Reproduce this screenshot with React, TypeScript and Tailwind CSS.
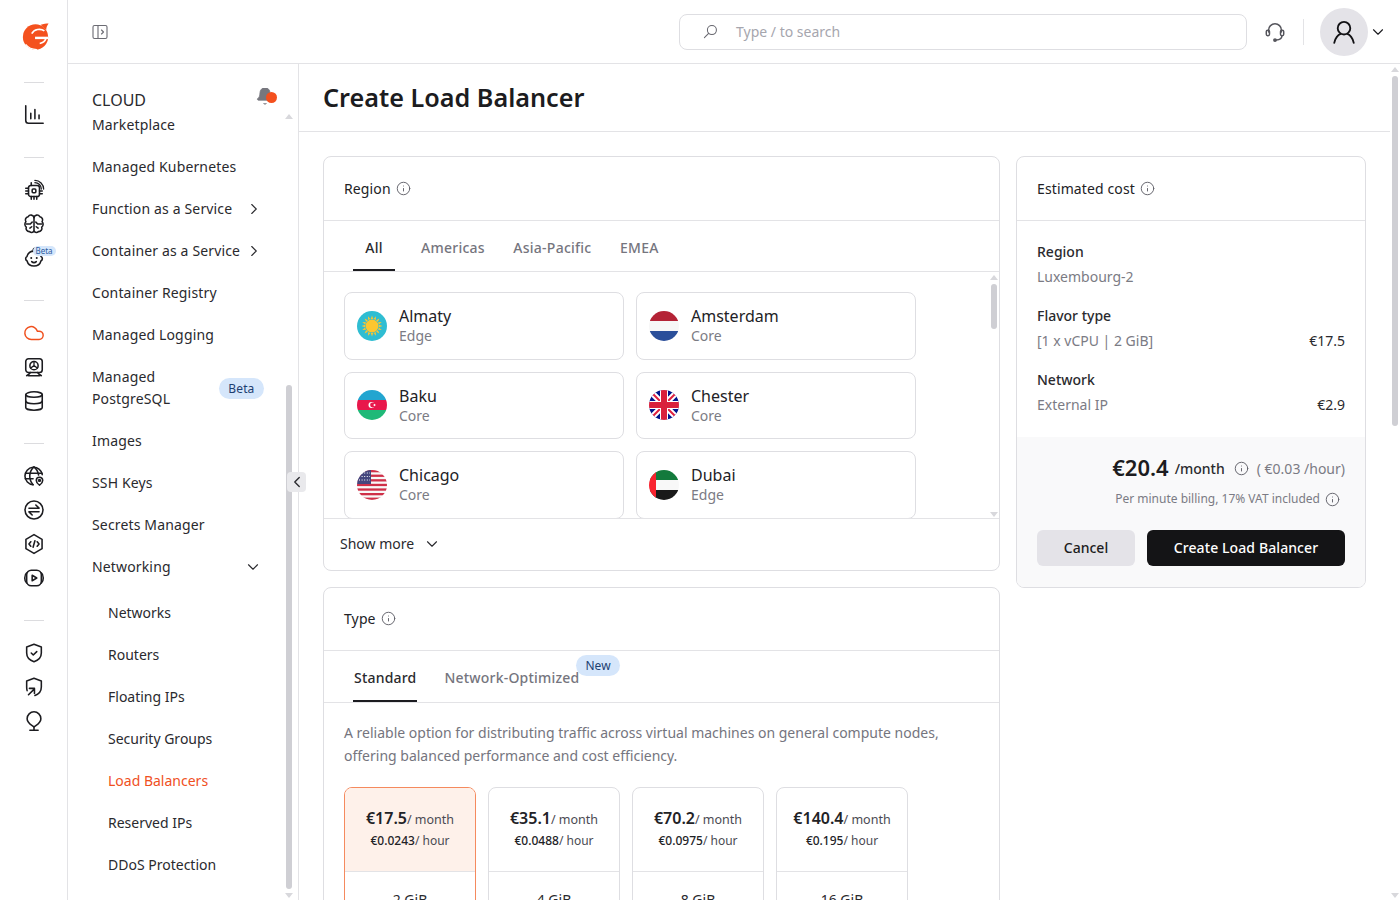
import type { ReactNode } from "react";
import {
  Bell,
  ChevronDown,
  ChevronLeft,
  ChevronRight,
  Cloud,
  Database,
  Info,
} from "lucide-react";

const NAV_TOP = [
  { label: "Marketplace" },
  { label: "Managed Kubernetes" },
  { label: "Function as a Service", arrow: true },
  { label: "Container as a Service", arrow: true },
  { label: "Container Registry" },
  { label: "Managed Logging" },
];
const NAV_MID = ["Images", "SSH Keys", "Secrets Manager"];
const NAV_SUB = ["Networks", "Routers", "Floating IPs", "Security Groups", "Load Balancers", "Reserved IPs", "DDoS Protection"];

const PLANS = [
  { month: "€17.5", hour: "€0.0243", ram: "2 GiB", active: true },
  { month: "€35.1", hour: "€0.0488", ram: "4 GiB" },
  { month: "€70.2", hour: "€0.0975", ram: "8 GiB" },
  { month: "€140.4", hour: "€0.195", ram: "16 GiB" },
];

function Svg({ children, className = "text-[#1c1c20]" }: { children: ReactNode; className?: string }) {
  return (
    <svg viewBox="0 0 24 24" width="22" height="22" fill="none" stroke="currentColor" strokeWidth="1.7" strokeLinecap="round" strokeLinejoin="round" className={className}>
      {children}
    </svg>
  );
}

const RAIL_GROUPS: ReactNode[][] = [
  [
    <Svg key="chart"><path d="M3 2v16a3 3 0 0 0 3 3h16" /><path d="M8.500 16v-6M13 16V6M17.500 16v-4" /></Svg>,
  ],
  [
    <Svg key="chip">
      <rect x="6" y="7" width="12" height="12" rx="2.500" />
      <rect x="10" y="11" width="4" height="4" rx="1" />
      <path d="M3 10h3M3 13h3M3 16h3M18 13h3M18 16h3M9 19v3M12 19v3M15 19v3M9 4v3" />
      <path d="M13 4a7 7 0 0 1 7 7M13 1.500A9.500 9.500 0 0 1 22.500 11" strokeWidth="1.400" />
    </Svg>,
    <Svg key="brain">
      <path d="M12 5v15" />
      <path d="M12 5a3.400 3.400 0 0 0-6.300-1A3.600 3.600 0 0 0 3.200 9.600a3.800 3.800 0 0 0 .4 5.800 3.600 3.600 0 0 0 3.600 4.900A3.300 3.300 0 0 0 12 20" />
      <path d="M12 5a3.400 3.400 0 0 1 6.300-1 3.600 3.600 0 0 1 2.500 5.600 3.800 3.800 0 0 1-.4 5.800 3.600 3.600 0 0 1-3.600 4.900A3.300 3.300 0 0 1 12 20" />
      <path d="M3.600 12H8l2-2M20.400 12H16l-2-2M7.500 16.500l2-1.500M16.500 16.500l-2-1.500" />
    </Svg>,
    <div key="baby" className="relative">
      <Svg>
        <path d="M12 4.500a8 8 0 0 0-7.700 6A2.500 2.500 0 0 0 4.300 15a8 8 0 0 0 15.400 0 2.500 2.500 0 0 0 0-4.500 8 8 0 0 0-4.200-5" />
        <path d="M12 4.500c-1.500-1-1-3 1-3" />
        <path d="M9 12v.1M15 12v.1" strokeWidth="2.200" />
        <path d="M9.500 16a3.500 3.500 0 0 0 5 0" />
      </Svg>
      <span className="absolute left-[10px] -top-[1px] rounded-full bg-[#d5e6fb] px-[3px] text-[8px] leading-[10px] text-[#2b5c9e]">Beta</span>
    </div>,
  ],
  [
    <Cloud key="cloud" size={22} strokeWidth={1.6} className="text-[#f0501e]" />,
    <Svg key="screen">
      <rect x="3" y="3" width="18" height="15" rx="3" />
      <circle cx="12" cy="10.500" r="4.500" />
      <path d="M12 10.500V6M12 10.500l-3.600 2.600M12 10.500l3.600 2.600" strokeWidth="1.400" />
      <path d="M4 21.500c3-1.800 4-3.500 4-3.500M20 21.500c-3-1.800-4-3.500-4-3.500M6 21.500h12" />
    </Svg>,
    <Database key="db" size={22} strokeWidth={1.7} className="text-[#1c1c20]" />,
  ],
  [
    <Svg key="globe">
      <path d="M21 10.500A9.500 9.500 0 1 0 11 21.500" />
      <path d="M3 9h18M2.500 15H11M12 2c-6 5-6 14-1 19.500M12 2c3 2.500 4.600 5.500 5 9" />
      <path d="M18 22s-3.500-2.600-3.500-5.200a3.500 3.500 0 0 1 7 0C21.500 19.400 18 22 18 22z" />
      <circle cx="18" cy="16.800" r="1" />
    </Svg>,
    <Svg key="swap">
      <circle cx="12" cy="12" r="9.800" />
      <path d="M6.500 10h11l-3.500-3.500M17.500 14h-11l3.500 3.500" />
    </Svg>,
    <Svg key="hex">
      <path d="M12 1.800l8.800 5.100v10.200L12 22.200l-8.800-5.100V6.900z" />
      <path d="M8.500 9.500L6.500 12l2 2.500M15.500 9.500l2 2.500-2 2.500M13 8.500l-2 7" />
    </Svg>,
    <Svg key="play">
      <rect x="4" y="3.500" width="16" height="17" rx="5" />
      <path d="M4 6.500c-2.800 2-2.800 9 0 11M20 6.500c2.800 2 2.800 9 0 11" />
      <path d="M10 9l5 3-5 3z" />
    </Svg>,
  ],
  [
    <Svg key="shield">
      <path d="M12 2.500l8 3v6.500c0 5-3.500 8-8 9.500-4.500-1.500-8-4.500-8-9.500V5.500z" />
      <path d="M9 12l2.200 2.200L15 10.500" />
    </Svg>,
    <Svg key="shield2">
      <path d="M4.500 16C4 14 4 13 4 12V5.500l8-3 8 3V12c0 4.500-3 7.800-7 9.200" />
      <path d="M6 20.500l6.500-6.500M7 13.500h5.500V19" />
    </Svg>,
    <Svg key="bulb">
      <path d="M12 2a7.500 7.500 0 0 0-7.500 7.500c0 4.500 3.500 6 7.500 9 4-3 7.500-4.500 7.500-9A7.500 7.500 0 0 0 12 2z" />
      <path d="M12 18.500V22M7.500 22h9" />
    </Svg>,
  ],
];

function Rail() {
  return (
    <aside className="flex h-full w-[68px] shrink-0 flex-col items-center border-r border-[#e3e3e6] bg-white">
      <div className="flex h-[72px] shrink-0 items-center pl-[3px]">
        <svg viewBox="5 5 31 31" width="29" height="29">
          <circle cx="20.500" cy="21" r="13.500" fill="#f4511e" />
          <path d="M26 8c3-1 6-1.500 8.500-1.500-1.500 2-2.500 4-2.500 7z" fill="#f4511e" />
          <path d="M30 14.500C26 11.500 19 12.500 16.500 17.500" fill="none" stroke="#fff" strokeWidth="1.800" />
          <path d="M20 22h14" fill="none" stroke="#fff" strokeWidth="2.600" />
          <path d="M31.500 23c-1 3-3.500 4.500-6.500 5" fill="none" stroke="#fff" strokeWidth="1.800" />
          <path d="M10 29c3 4 7.500 5.500 12 5.500" fill="none" stroke="#fff" strokeWidth="1.300" />
        </svg>
      </div>
      {RAIL_GROUPS.map((group, i) => (
        <div key={i} className="flex flex-col items-center">
          <div className="mt-[10px] h-px w-5 bg-[#dcdcdf]" />
          <div className="mb-[10px] mt-[15px] flex flex-col items-center">
            {group.map((icon, j) => (
              <div key={j} className="flex h-[34px] w-[34px] items-center justify-center">
                {icon}
              </div>
            ))}
          </div>
          <div className="h-[5px]" />
        </div>
      ))}
    </aside>
  );
}

function Sidebar() {
  return (
    <nav className="relative flex h-full w-[231px] shrink-0 border-r border-[#e3e3e6] bg-white pt-6 text-[14px] leading-[22px] tracking-[0.15px] text-[#2a2a2e]">
      <div className="min-w-0 flex-1 overflow-hidden pl-6">
        <div className="-mb-2 flex h-[24px] items-center justify-between pr-[10px] text-[16px] tracking-normal">
          <span>CLOUD</span>
          <span className="relative -top-[4px] flex">
            <Bell size={20} fill="#77777e" strokeWidth={1} className="text-[#77777e]" />
            <span className="absolute -right-[2px] top-[6px] h-[11px] w-[11px] rounded-full bg-[#f4501e]" />
          </span>
        </div>
        {NAV_TOP.map((item) => (
          <div key={item.label} className="flex h-[42px] items-center justify-between pr-[22px]">
            <span>{item.label}</span>
            {item.arrow && <ChevronRight size={18} strokeWidth={1.5} />}
          </div>
        ))}
        <div className="flex h-[64px] items-center justify-between pr-[21px]">
          <span>Managed<br />PostgreSQL</span>
          <span className="rounded-full bg-[#d5e6fb] px-[9.500px] text-[12px] leading-[21px] text-[#1d3f72]">Beta</span>
        </div>
        {NAV_MID.map((label) => (
          <div key={label} className="flex h-[42px] items-center">{label}</div>
        ))}
        <div className="flex h-[42px] items-center justify-between pr-[23px]">
          <span>Networking</span>
          <ChevronDown size={18} strokeWidth={1.5} />
        </div>
        <div className="mt-1 pl-4 tracking-normal">
          {NAV_SUB.map((label) => (
            <div key={label} className={`flex h-[42px] items-center ${label === "Load Balancers" ? "text-[#f0501e]" : ""}`}>
              {label}
            </div>
          ))}
        </div>
      </div>
      <div className="mr-[6px] flex w-[7px] shrink-0 flex-col items-center pb-[2px] pt-[26px]">
        <div className="h-0 w-0 border-x-[4px] border-b-[5px] border-x-transparent border-b-[#d8d8dc]" />
        <div className="mt-[266px] w-[6px] flex-1 rounded-full bg-[#cfcfd4]" />
        <div className="mt-[4px] h-0 w-0 border-x-[4px] border-t-[5px] border-x-transparent border-t-[#d8d8dc]" />
      </div>
      <div className="absolute left-[219px] top-[408px] flex h-[20px] w-[19px] items-center justify-center rounded-[4px] bg-[#e9e9ec]">
        <ChevronLeft size={18} strokeWidth={1.8} className="text-[#2a2a2e]" />
      </div>
    </nav>
  );
}

function Header() {
  return (
    <header className="flex h-[64px] shrink-0 items-center border-b border-[#e3e3e6] bg-white pl-6">
      <svg viewBox="0 0 16 16" width="16" height="16" fill="none" stroke="#6b6b73" strokeWidth="1.100" strokeLinecap="round" strokeLinejoin="round">
        <rect x="1" y="1.500" width="14" height="13" rx="1.500" />
        <path d="M6 1.500v13M9.500 6l2 2-2 2" />
      </svg>
      <div className="ml-auto flex h-[36px] w-[568px] items-center rounded-[8px] border border-[#dedee2] pl-[23px]">
        <svg viewBox="0 0 16 16" width="15" height="15" fill="none" stroke="#66666e" strokeWidth="1.100" strokeLinecap="round">
          <circle cx="9.500" cy="6.500" r="4.800" />
          <path d="M6 10L1.500 14.500" />
        </svg>
        <span className="ml-[18px] text-[14px] text-[#a6a6ae]">Type / to search</span>
      </div>
      <div className="ml-[17px] flex w-[22px] justify-center">
        <svg viewBox="0 0 24 24" width="22" height="22" fill="none" stroke="#55555c" strokeWidth="1.600" strokeLinecap="round">
          <path d="M5 12V10a7 7 0 0 1 14 0v2" />
          <rect x="2.500" y="10" width="3.500" height="6" rx="1.500" />
          <rect x="18" y="10" width="3.500" height="6" rx="1.500" />
          <path d="M19.500 16c0 3-2.500 4.500-6 4.800" />
          <circle cx="12" cy="20.800" r="1.300" fill="#55555c" />
        </svg>
      </div>
      <div className="ml-[17px] h-[26px] w-px bg-[#e3e3e6]" />
      <div className="ml-4 flex h-[48px] w-[48px] items-center justify-center rounded-full bg-[#e4e3e8]">
        <svg viewBox="0 0 24 24" width="26" height="26" fill="none" stroke="#111114" strokeWidth="1.700" strokeLinecap="round">
          <circle cx="12" cy="8.500" r="5.800" />
          <path d="M3 22c.8-4.500 3.800-7.500 5.500-8M21 22c-.8-4.500-3.800-7.500-5.500-8" />
        </svg>
      </div>
      <ChevronDown size={18} strokeWidth={1.5} className="ml-px mr-[13px] text-[#1c1c20]" />
    </header>
  );
}

function CardTitle({ title, short }: { title: string; short?: boolean }) {
  return (
    <div className={`flex shrink-0 items-center gap-[5px] border-b border-[#e3e3e6] pl-5 text-[14px] tracking-[0.12px] text-[#222226] ${short ? "h-[63px] pb-[1px]" : "h-[64px]"}`}>
      {title}
      <Info size={15} strokeWidth={1.5} className="text-[#5f5f67]" />
    </div>
  );
}

function FlagKz() {
  const rays = Array.from({ length: 16 }, (_, i) => i * 22.5);
  return (
    <svg viewBox="0 0 30 30" width="30" height="30">
      <circle cx="15" cy="15" r="15" fill="#2fbdd2" />
      {rays.map((a) => (
        <path key={a} d="M15 4.500l1.200 3.500h-2.400z" fill="#fbc531" transform={`rotate(${a} 15 15)`} />
      ))}
      <circle cx="15" cy="15" r="6.500" fill="#fdc62f" />
    </svg>
  );
}

function FlagNl() {
  return (
    <svg viewBox="0 0 30 30" width="30" height="30">
      <clipPath id="nl"><circle cx="15" cy="15" r="15" /></clipPath>
      <g clipPath="url(#nl)">
        <rect width="30" height="10" fill="#b42336" />
        <rect y="10" width="30" height="10" fill="#f7f7f7" />
        <rect y="20" width="30" height="10" fill="#2b4f9a" />
      </g>
    </svg>
  );
}

function FlagAz() {
  return (
    <svg viewBox="0 0 30 30" width="30" height="30">
      <clipPath id="az"><circle cx="15" cy="15" r="15" /></clipPath>
      <g clipPath="url(#az)">
        <rect width="30" height="10" fill="#22a5d0" />
        <rect y="10" width="30" height="10" fill="#e8174b" />
        <rect y="20" width="30" height="10" fill="#1fb978" />
        <circle cx="14.500" cy="15" r="3" fill="#fff" />
        <circle cx="15.500" cy="15" r="2.400" fill="#e8174b" />
        <circle cx="17.500" cy="15" r="1" fill="#fff" />
      </g>
    </svg>
  );
}

function FlagUk() {
  return (
    <svg viewBox="0 0 30 30" width="30" height="30">
      <clipPath id="uk"><circle cx="15" cy="15" r="15" /></clipPath>
      <g clipPath="url(#uk)">
        <rect width="30" height="30" fill="#00148c" />
        <path d="M0 0l30 30M30 0L0 30" stroke="#fff" strokeWidth="6" />
        <path d="M0 0l30 30M30 0L0 30" stroke="#e0213f" strokeWidth="2" />
        <path d="M15 0v30M0 15h30" stroke="#fff" strokeWidth="8" />
        <path d="M15 0v30M0 15h30" stroke="#d9203c" strokeWidth="6" />
      </g>
    </svg>
  );
}

function FlagUs() {
  const stripes = [0, 4.6, 9.2, 13.8, 18.4, 23, 27.6];
  return (
    <svg viewBox="0 0 30 30" width="30" height="30">
      <clipPath id="us"><circle cx="15" cy="15" r="15" /></clipPath>
      <g clipPath="url(#us)">
        <rect width="30" height="30" fill="#f8f8f8" />
        {stripes.map((y) => (
          <rect key={y} y={y} width="30" height="2.300" fill="#cf2f48" />
        ))}
        <rect width="14" height="14" fill="#45467e" />
        <path d="M2 3h11M2 6.500h11M2 10h11" stroke="#fff" strokeWidth="1" strokeDasharray="1 1.600" />
      </g>
    </svg>
  );
}

function FlagAe() {
  return (
    <svg viewBox="0 0 30 30" width="30" height="30">
      <clipPath id="ae"><circle cx="15" cy="15" r="15" /></clipPath>
      <g clipPath="url(#ae)">
        <rect width="30" height="10" fill="#137a3c" />
        <rect y="10" width="30" height="10" fill="#f8f8f8" />
        <rect y="20" width="30" height="10" fill="#1a1a1a" />
        <rect width="7" height="30" fill="#f9232f" />
      </g>
    </svg>
  );
}

const REGIONS = [
  { city: "Almaty", kind: "Edge", flag: <FlagKz /> },
  { city: "Amsterdam", kind: "Core", flag: <FlagNl /> },
  { city: "Baku", kind: "Core", flag: <FlagAz /> },
  { city: "Chester", kind: "Core", flag: <FlagUk /> },
  { city: "Chicago", kind: "Core", flag: <FlagUs /> },
  { city: "Dubai", kind: "Edge", flag: <FlagAe /> },
];

function RegionCard() {
  return (
    <section className="shrink-0 rounded-[8px] border border-[#dedee2] bg-white">
      <CardTitle title="Region" />
      <div className="flex h-[51px] gap-[28.500px] border-b border-[#e3e3e6] pl-[29px] pt-[4px] text-[14px] font-medium tracking-[0.25px]">
        <div className="-mr-[2.500px] flex w-[42px] items-center justify-center border-b-2 border-[#1c1c20] text-[#2a2a2e]">All</div>
        {["Americas", "Asia-Pacific", "EMEA"].map((tab) => (
          <div key={tab} className="flex items-center border-b-2 border-transparent text-[#75757e]">{tab}</div>
        ))}
      </div>
      <div className="flex h-[247px] border-b border-[#e3e3e6]">
        <div className="grid flex-1 grid-cols-[280px_280px] content-start gap-x-3 gap-y-3 overflow-hidden pl-5 pt-5">
          {REGIONS.map((r) => (
            <div key={r.city} className="flex h-[67.500px] shrink-0 items-center gap-3 rounded-[8px] border border-[#dedee2] pl-3">
              {r.flag}
              <div>
                <div className="text-[16px] leading-[20px] text-[#222226]">{r.city}</div>
                <div className="text-[14px] leading-[19px] text-[#7b7b84]">{r.kind}</div>
              </div>
            </div>
          ))}
        </div>
        <div className="mr-[2px] flex w-[7px] shrink-0 flex-col items-center pb-[1px] pt-[3px]">
          <div className="h-0 w-0 border-x-[4px] border-b-[5px] border-x-transparent border-b-[#d8d8dc]" />
          <div className="mt-[4px] h-[45px] w-[6px] rounded-full bg-[#cfcfd4]" />
          <div className="mt-auto h-0 w-0 border-x-[4px] border-t-[5px] border-x-transparent border-t-[#d8d8dc]" />
        </div>
      </div>
      <div className="flex h-[51px] items-center gap-[9px] pb-[2px] pl-4 text-[14px] text-[#2a2a2e]">
        Show more
        <ChevronDown size={18} strokeWidth={1.5} />
      </div>
    </section>
  );
}

function TypeCard() {
  return (
    <section className="shrink-0 rounded-[8px] border border-[#dedee2] bg-white">
      <CardTitle title="Type" short />
      <div className="relative flex h-[52px] gap-[27px] border-b border-[#e3e3e6] pl-[29px] pt-[3px] text-[14px] font-medium tracking-[0.2px]">
        <div className="flex items-center border-b-2 border-[#1c1c20] px-px text-[#2a2a2e]">Standard</div>
        <div className="flex items-center border-b-2 border-transparent text-[#75757e]">Network-Optimized</div>
        <span className="absolute left-[252px] top-[4px] rounded-full bg-[#d5e6fb] px-[9.500px] text-[12px] font-normal leading-[21px] tracking-normal text-[#1d3f72]">New</span>
      </div>
      <p className="px-5 pt-[18px] text-[14px] leading-[23px] text-[#75757e]">
        A reliable option for distributing traffic across virtual machines on general compute nodes,
        <br />
        offering balanced performance and cost efficiency.
      </p>
      <div className="flex gap-3 pl-5 pt-[20px]">
        {PLANS.map((p) => (
          <div key={p.ram} className={`w-[132px] overflow-hidden rounded-t-[8px] border text-center ${p.active ? "border-[#f58a5e]" : "border-[#dedee2]"}`}>
            <div className={`flex h-[84px] flex-col justify-center border-b pb-[2px] ${p.active ? "border-[#e3e3e6] bg-[#fef1ea]" : "border-[#e3e3e6]"}`}>
              <div className="text-[12.500px] leading-[24px] text-[#4a4a52]">
                <span className="text-[16px] font-semibold text-[#222226]">{p.month}</span>/ month
              </div>
              <div className="-mt-px text-[12px] leading-[20px] text-[#4a4a52]">
                <span className="font-medium text-[#222226]">{p.hour}</span>/ hour
              </div>
            </div>
            <div className="pt-[17px] text-[14px] leading-[22px] text-[#2a2a2e]">{p.ram}</div>
            <div className="h-[60px]" />
          </div>
        ))}
      </div>
    </section>
  );
}

function CostRow({ title, sub, price }: { title: string; sub: string; price?: string }) {
  return (
    <div className="mb-[14px]">
      <div className="text-[14px] font-medium leading-[25px] text-[#2a2a2e]">{title}</div>
      <div className="flex justify-between text-[14px] leading-[25px] text-[#7b7b84]">
        <span>{sub}</span>
        {price && <span className="text-[#2a2a2e]">{price}</span>}
      </div>
    </div>
  );
}

function CostCard() {
  return (
    <aside className="w-[350px] shrink-0 self-start overflow-hidden rounded-[8px] border border-[#dedee2] bg-white">
      <CardTitle title="Estimated cost" />
      <div className="px-5 pb-[6px] pt-[18px]">
        <CostRow title="Region" sub="Luxembourg-2" />
        <CostRow title="Flavor type" sub="[1 x vCPU | 2 GiB]" price="€17.5" />
        <CostRow title="Network" sub="External IP" price="€2.9" />
      </div>
      <div className="h-[150px] bg-[#f9f9fa] px-5 pt-[15px]">
        <div className="flex h-[30px] items-center justify-end text-[#2a2a2e]">
          <span className="text-[22px] font-semibold text-[#1c1c20]">€20.4</span>
          <span className="ml-[6px] mt-[3px] text-[14px] font-medium">/month</span>
          <Info size={15} strokeWidth={1.5} className="ml-[9px] mt-[3px] text-[#5f5f67]" />
          <span className="ml-[8px] mt-[3px] text-[14px] text-[#7b7b84]">( €0.03 /hour)</span>
        </div>
        <div className="mt-[7px] flex items-center justify-end gap-[5px] pr-[5px] text-[12px] leading-[20px] text-[#7b7b84]">
          Per minute billing, 17% VAT included
          <Info size={15} strokeWidth={1.5} className="text-[#5f5f67]" />
        </div>
        <div className="mt-[21px] flex gap-3">
          <button className="h-[36px] w-[98px] rounded-[6px] bg-[#e4e3e8] pb-[2px] text-[14px] font-medium text-[#1c1c20]">Cancel</button>
          <button className="h-[36px] flex-1 rounded-[6px] bg-[#141416] pb-[2px] text-[14px] font-medium tracking-[0.1px] text-white">Create Load Balancer</button>
        </div>
      </div>
    </aside>
  );
}

export default function App() {
  return (
    <div className="flex h-screen w-full overflow-hidden bg-white font-['Noto_Sans',sans-serif]">
      <Rail />
      <div className="flex min-w-0 flex-1 flex-col">
        <Header />
        <div className="flex min-h-0 flex-1">
          <Sidebar />
          <main className="flex min-w-0 flex-1 flex-col overflow-hidden">
            <div className="flex h-[68px] shrink-0 items-center border-b border-[#e3e3e6] pl-6 text-[25.200px] font-semibold text-[#1c1c20]">
              Create Load Balancer
            </div>
            <div className="flex gap-4 pl-6 pr-[24px] pt-6">
              <div className="flex w-[677px] shrink-0 flex-col gap-4">
                <RegionCard />
                <TypeCard />
              </div>
              <CostCard />
            </div>
          </main>
          <div className="flex w-[10px] shrink-0 flex-col items-center pb-[2px] pt-[3px]">
            <div className="h-0 w-0 border-x-[4px] border-b-[5px] border-x-transparent border-b-[#d8d8dc]" />
            <div className="mt-[4px] h-[350px] w-[6px] rounded-full bg-[#cfcfd4]" />
            <div className="mt-auto h-0 w-0 border-x-[4px] border-t-[5px] border-x-transparent border-t-[#d8d8dc]" />
          </div>
        </div>
      </div>
    </div>
  );
}
